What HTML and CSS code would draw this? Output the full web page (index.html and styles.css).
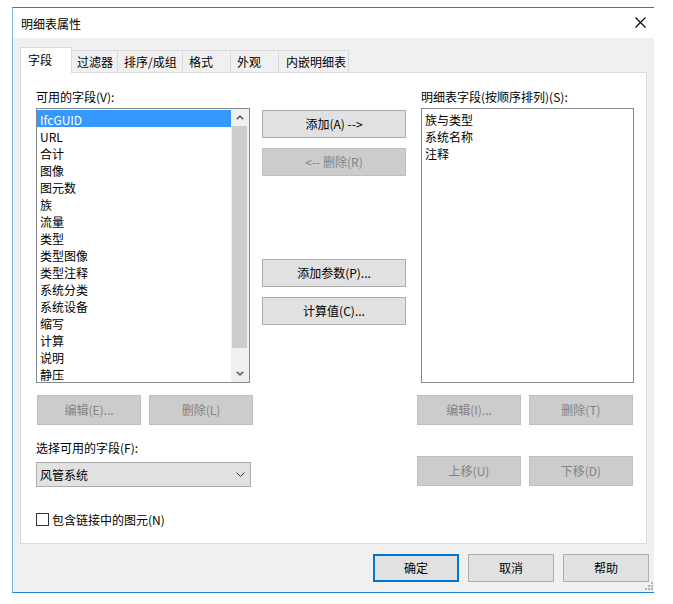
FILE: index.html
```html
<!DOCTYPE html>
<html lang="zh-CN">
<head>
<meta charset="utf-8">
<title>明细表属性</title>
<link rel="stylesheet" href="styles.css">
</head>
<body>
<div class="window">
  <div class="titlebar">
    <span class="title">明细表属性</span>
    <svg class="close" width="11" height="11" viewBox="0 0 11 11"><path d="M0.5 0.5 L10.5 10.5 M10.5 0.5 L0.5 10.5" stroke="#000" stroke-width="1.1" fill="none"/></svg>
  </div>
  <div class="client">
    <div class="tabs">
      <div class="tab active t1">字段</div>
      <div class="tab t2">过滤器</div>
      <div class="tab t3">排序/成组</div>
      <div class="tab t4">格式</div>
      <div class="tab t5">外观</div>
      <div class="tab t6">内嵌明细表</div>
    </div>
    <div class="panel">
      <div class="col left">
        <div class="label">可用的字段(V):</div>
        <div class="listbox">
          <div class="items">
            <div class="item selected">IfcGUID</div>
            <div class="item">URL</div>
            <div class="item">合计</div>
            <div class="item">图像</div>
            <div class="item">图元数</div>
            <div class="item">族</div>
            <div class="item">流量</div>
            <div class="item">类型</div>
            <div class="item">类型图像</div>
            <div class="item">类型注释</div>
            <div class="item">系统分类</div>
            <div class="item">系统设备</div>
            <div class="item">缩写</div>
            <div class="item">计算</div>
            <div class="item">说明</div>
            <div class="item">静压</div>
          </div>
          <div class="scrollbar">
            <div class="arrow"><svg width="8" height="5" viewBox="0 0 8 5"><path d="M0.8 4.3 L4 1.1 L7.2 4.3" stroke="#606060" stroke-width="1.6" fill="none"/></svg></div>
            <div class="thumb"></div>
            <div class="track"></div>
            <div class="arrow"><svg width="8" height="5" viewBox="0 0 8 5"><path d="M0.8 0.7 L4 3.9 L7.2 0.7" stroke="#606060" stroke-width="1.6" fill="none"/></svg></div>
          </div>
        </div>
        <div class="btnrow">
          <div class="btn disabled small">编辑(E)...</div>
          <div class="btn disabled small">删除(L)</div>
        </div>
        <div class="label label-sel">选择可用的字段(F):</div>
        <div class="combo">
          <span>风管系统</span>
          <svg width="9" height="5" viewBox="0 0 9 5"><path d="M0.5 0.5 L4.5 4.5 L8.5 0.5" stroke="#333" stroke-width="1" fill="none"/></svg>
        </div>
        <div class="check">
          <span class="box"></span>
          <span>包含链接中的图元(N)</span>
        </div>
      </div>
      <div class="col mid">
        <div class="btn wide b-add">添加(A) --&gt;</div>
        <div class="btn wide disabled b-del">&lt;-- 删除(R)</div>
        <div class="btn wide b-param">添加参数(P)...</div>
        <div class="btn wide b-calc">计算值(C)...</div>
      </div>
      <div class="col right">
        <div class="label indent">明细表字段(按顺序排列)(S):</div>
        <div class="listbox plain indent">
          <div class="items">
            <div class="item">族与类型</div>
            <div class="item">系统名称</div>
            <div class="item">注释</div>
          </div>
        </div>
        <div class="btnrow">
          <div class="btn disabled small">编辑(I)...</div>
          <div class="btn disabled small">删除(T)</div>
        </div>
        <div class="btnrow moverow">
          <div class="btn disabled small">上移(U)</div>
          <div class="btn disabled small">下移(D)</div>
        </div>
      </div>
    </div>
    <div class="footer">
      <div class="btn foot default">确定</div>
      <div class="btn foot">取消</div>
      <div class="btn foot">帮助</div>
    </div>
    <svg class="grip" width="8" height="8" viewBox="0 0 8 8">
      <rect x="6" y="0" width="2" height="2" fill="#b4b4b4"/>
      <rect x="3" y="3" width="2" height="2" fill="#b4b4b4"/>
      <rect x="6" y="3" width="2" height="2" fill="#b4b4b4"/>
      <rect x="0" y="6" width="2" height="2" fill="#b4b4b4"/>
      <rect x="3" y="6" width="2" height="2" fill="#b4b4b4"/>
      <rect x="6" y="6" width="2" height="2" fill="#b4b4b4"/>
    </svg>
  </div>
</div>
</body>
</html>
```

FILE: styles.css
```css
* { box-sizing: border-box; }

html, body {
  margin: 0;
  padding: 0;
  background: #ffffff;
}

body {
  font-family: "Noto Sans CJK SC", "Noto Sans", sans-serif;
  font-size: 12px;
  line-height: 17px;
  color: #000;
  padding: 7px 0 0 12px;
}

.window {
  width: 642px;
  height: 586px;
  border: 1px solid #1883d7;
  border-left-color: #7fb2e0;
  border-right: none;
  display: flex;
  flex-direction: column;
  position: relative;
}

.titlebar {
  height: 30px;
  flex: none;
  background: #ffffff;
  display: flex;
  align-items: center;
  justify-content: space-between;
  padding: 0 8px 0 8px;
}

.title {
  font-size: 12px;
}

.close {
  display: block;
  margin-top: -1px;
}

.client {
  flex: 1;
  background: #f0f0f0;
  padding: 9px 0 0 7px;
  display: flex;
  flex-direction: column;
}

/* Tabs */
.tabs {
  display: flex;
  align-items: flex-end;
  height: 26px;
  margin-bottom: -1px;
  position: relative;
  z-index: 1;
}

.tab {
  height: 22px;
  margin-bottom: 1px;
  border: 1px solid #d9d9d9;
  border-bottom: none;
  background: #f0f0f0;
  padding: 2px 0 0 5px;
  margin-left: -1px;
  white-space: nowrap;
}

.tab.active {
  height: 26px;
  margin-bottom: 0;
  background: #ffffff;
  padding: 3px 0 0 7px;
  margin-left: 0;
}

.t1 { width: 52px; }
.t2 { width: 47px; }
.t3 { width: 66px; padding-left: 6px; }
.t4 { width: 49px; padding-left: 6px; }
.t5 { width: 49px; padding-left: 6px; }
.t6 { width: 71px; padding-left: 7px; }

/* Panel */
.panel {
  width: 627px;
  height: 472px;
  flex: none;
  background: #ffffff;
  border: 1px solid #d9d9d9;
  padding: 15px 0 0 15px;
  display: flex;
  gap: 11px;
}

.col {
  display: flex;
  flex-direction: column;
}

.col.left { width: 215px; }
.col.mid { width: 144px; }
.col.right { width: 216px; }

.label {
  height: 17px;
  white-space: nowrap;
}

.indent { margin-left: 4px; }

.listbox {
  margin-top: 3px;
  width: 214px;
  height: 275px;
  border: 1px solid #828790;
  background: #ffffff;
  display: flex;
}

.listbox.plain {
  width: 213px;
}

.items {
  flex: 1;
  display: flex;
  flex-direction: column;
  padding-top: 1px;
}

.item {
  height: 17px;
  line-height: 17px;
  padding: 1px 0 0 3px;
  white-space: nowrap;
}

.item.selected {
  background: #3399ff;
  color: #ffffff;
}

.scrollbar {
  width: 18px;
  flex: none;
  background: #f0f0f0;
  display: flex;
  flex-direction: column;
}

.arrow {
  height: 17px;
  display: flex;
  align-items: center;
  justify-content: center;
}

.arrow svg { display: block; }

.thumb {
  height: 222px;
  margin: 0 2px 0 1px;
  background: #cdcdcd;
}

.track { flex: 1; }

/* Buttons */
.btn {
  background: #e1e1e1;
  border: 1px solid #adadad;
  display: flex;
  align-items: center;
  justify-content: center;
  white-space: nowrap;
  padding-bottom: 2px;
}

.btn.disabled {
  background: #cccccc;
  border-color: #bfbfbf;
  color: #838383;
}

.btnrow {
  display: flex;
  gap: 8px;
  margin-top: 12px;
  margin-left: 1px;
}

.col.right .btnrow { margin-left: 0; }

.btnrow .btn.small {
  width: 104px;
  height: 30px;
  flex: none;
}

.moverow { margin-top: 31px; }

.btn.wide {
  width: 144px;
  height: 28px;
}

.b-add { margin-top: 22px; }
.b-del { margin-top: 10px; }
.b-param { margin-top: 83px; }
.b-calc { margin-top: 10px; }

.label-sel {
  margin-top: 14px;
}

.combo {
  margin-top: 6px;
  width: 215px;
  height: 25px;
  background: #e1e1e1;
  border: 1px solid #adadad;
  display: flex;
  align-items: center;
  justify-content: space-between;
  padding: 0 5px 0 3px;
}

.combo svg { display: block; }

.check {
  margin-top: 24px;
  display: flex;
  align-items: center;
  gap: 3px;
  height: 17px;
}

.check .box {
  width: 13px;
  height: 13px;
  border: 1px solid #333333;
  background: #ffffff;
  flex: none;
}

/* Footer */
.footer {
  margin-top: 10px;
  display: flex;
  justify-content: flex-end;
  gap: 9px;
  padding-right: 5px;
}

.btn.foot {
  width: 86px;
  height: 28px;
}

.btn.default {
  border: 2px solid #0078d7;
}

.grip {
  position: absolute;
  right: 1px;
  bottom: 2px;
  display: block;
}
```
